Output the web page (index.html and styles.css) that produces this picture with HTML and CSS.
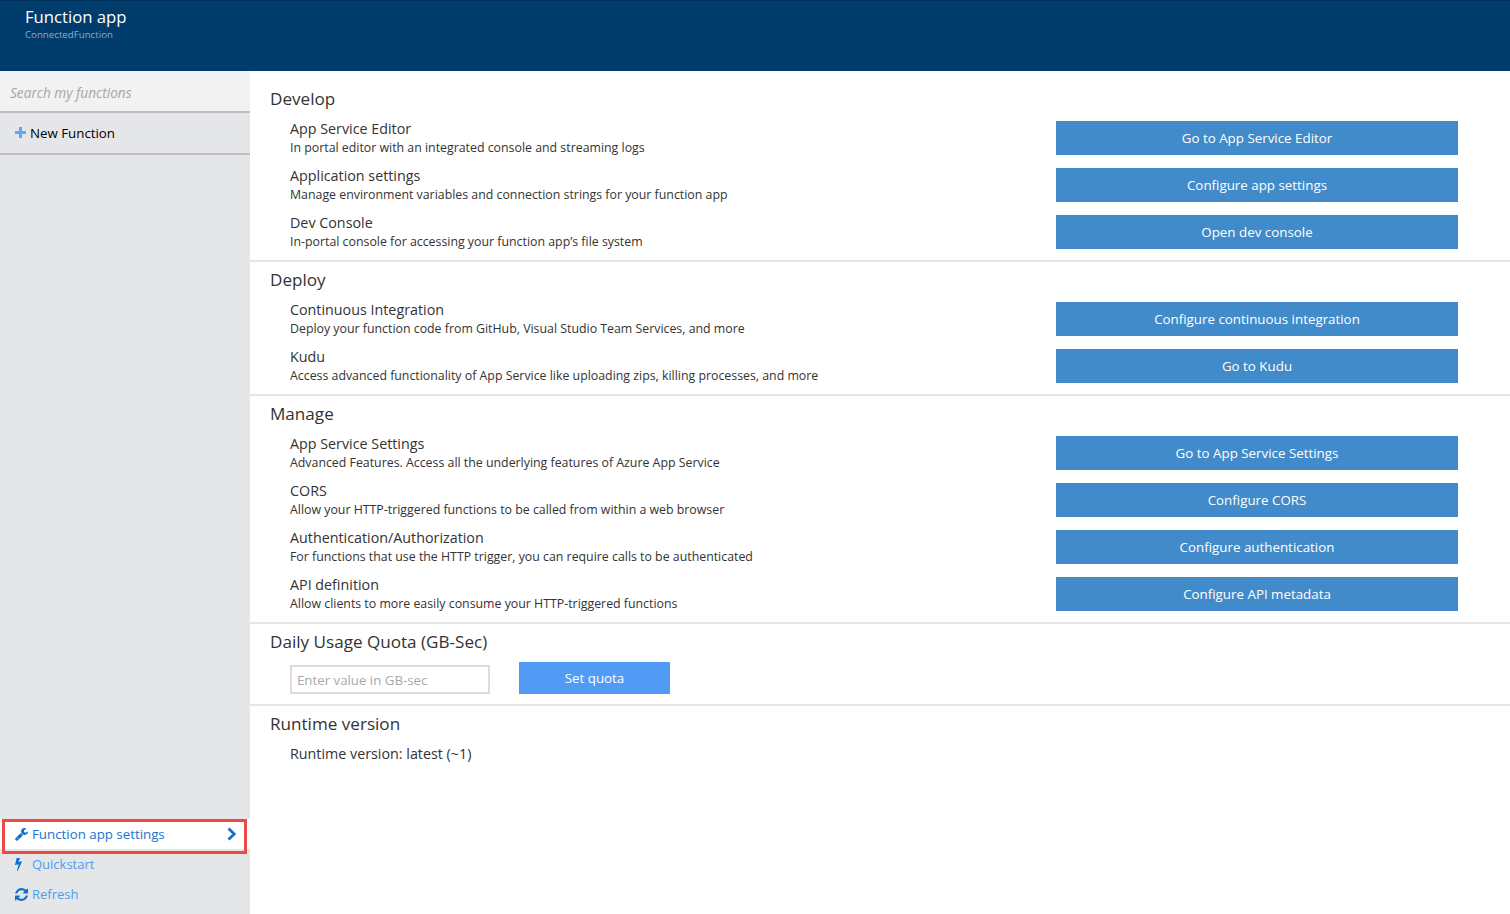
FILE: index.html
```html
<!DOCTYPE html>
<html lang="en">
<head>
<meta charset="utf-8">
<title>Function app</title>
<link rel="stylesheet" href="styles.css">
</head>
<body>
<header class="topbar">
  <h1 class="topbar-title">Function app</h1>
  <p class="topbar-sub">ConnectedFunction</p>
</header>
<div class="layout">
  <nav class="sidebar">
    <input class="search" type="text" placeholder="Search my functions">
    <a class="new-function">
      <svg class="plus" viewBox="0 0 11 11"><path d="M4 0h3v4h4v3H7v4H4V7H0V4h4z"/></svg>
      <span>New Function</span>
    </a>
    <div class="sidebar-bottom">
      <a class="nav-item active">
        <svg class="icon" viewBox="0 0 1664 1664"><path d="M384 1344q0-26-19-45t-45-19-45 19-19 45 19 45 45 19 45-19 19-45zm644-420l-682 682q-37 37-90 37-52 0-91-37l-106-108q-38-36-38-90 0-53 38-91l681-681q39 98 114.500 173.500t173.500 114.500zm634-435q0 39-23 106-47 134-164.500 217.500t-258.500 83.500q-185 0-316.500-131.500t-131.500-316.500 131.500-316.500 316.500-131.500q58 0 121.500 16.500t107.500 46.500q16 11 16 28t-16 28l-293 169v224l193 107q5-3 79-48.500t135.500-81 70.500-35.500q15 0 23.500 10t8.500 25z"/></svg>
        <span>Function app settings</span>
        <svg class="chevron" viewBox="0 0 10 14"><path d="M1.500 1.500L7.200 7l-5.700 5.500"/></svg>
        <span class="highlight"></span>
      </a>
      <a class="nav-item">
        <svg class="icon bolt" viewBox="0 0 896 1664"><path d="M885 566q18 20 7 44l-540 1157q-13 25-42 25-4 0-14-2-17-5-25.500-19t-4.500-30l197-808-406 101q-4 1-12 1-18 0-31-11-18-15-13-39l201-825q4-14 16-23t28-9h328q19 0 32 12.500t13 29.500q0 8-5 18l-171 463 396-98q8-2 12-2 19 0 34 15z"/></svg>
        <span>Quickstart</span>
      </a>
      <a class="nav-item">
        <svg class="icon" viewBox="0 0 1536 1536"><path d="M1511 928q0 5-1 7-64 268-268 434.500t-478 166.500q-146 0-282.500-55t-243.500-157l-129 129q-19 19-45 19t-45-19-19-45v-448q0-26 19-45t45-19h448q26 0 45 19t19 45-19 45l-137 137q71 66 161 102t187 36q134 0 250-65t186-179q11-17 53-117 8-23 30-23h192q13 0 22.500 9.500t9.500 22.500zm25-800v448q0 26-19 45t-45 19h-448q-26 0-45-19t-19-45 19-45l138-138q-148-137-349-137-134 0-250 65t-186 179q-11 17-53 117-8 23-30 23h-199q-13 0-22.500-9.500t-9.500-22.500v-7q65-268 270-434.500t480-166.500q146 0 284 55.500t245 156.500l130-129q19-19 45-19t45 19 19 45z"/></svg>
        <span>Refresh</span>
      </a>
    </div>
  </nav>
  <main class="content">
    <section class="section">
      <h2>Develop</h2>
      <div class="rows">
        <div class="row"><div class="info"><h3>App Service Editor</h3><p>In portal editor with an integrated console and streaming logs</p></div><button class="action">Go to App Service Editor</button></div>
        <div class="row"><div class="info"><h3>Application settings</h3><p>Manage environment variables and connection strings for your function app</p></div><button class="action">Configure app settings</button></div>
        <div class="row"><div class="info"><h3>Dev Console</h3><p>In-portal console for accessing your function app’s file system</p></div><button class="action">Open dev console</button></div>
      </div>
    </section>
    <section class="section">
      <h2>Deploy</h2>
      <div class="rows">
        <div class="row"><div class="info"><h3>Continuous Integration</h3><p>Deploy your function code from GitHub, Visual Studio Team Services, and more</p></div><button class="action">Configure continuous integration</button></div>
        <div class="row"><div class="info"><h3>Kudu</h3><p>Access advanced functionality of App Service like uploading zips, killing processes, and more</p></div><button class="action">Go to Kudu</button></div>
      </div>
    </section>
    <section class="section">
      <h2>Manage</h2>
      <div class="rows">
        <div class="row"><div class="info"><h3>App Service Settings</h3><p>Advanced Features. Access all the underlying features of Azure App Service</p></div><button class="action">Go to App Service Settings</button></div>
        <div class="row"><div class="info"><h3>CORS</h3><p>Allow your HTTP-triggered functions to be called from within a web browser</p></div><button class="action">Configure CORS</button></div>
        <div class="row"><div class="info"><h3>Authentication/Authorization</h3><p>For functions that use the HTTP trigger, you can require calls to be authenticated</p></div><button class="action">Configure authentication</button></div>
        <div class="row"><div class="info"><h3>API definition</h3><p>Allow clients to more easily consume your HTTP-triggered functions</p></div><button class="action">Configure API metadata</button></div>
      </div>
    </section>
    <section class="section quota">
      <h2>Daily Usage Quota (GB-Sec)</h2>
      <div class="quota-form">
        <input class="quota-input" type="text" placeholder="Enter value in GB-sec">
        <button class="quota-button">Set quota</button>
      </div>
    </section>
    <section class="section runtime">
      <h2>Runtime version</h2>
      <div class="rows"><div class="info"><h3>Runtime version: latest (~1)</h3></div></div>
    </section>
  </main>
</div>
</body>
</html>
```
FILE: styles.css
```css
* { box-sizing: border-box; }
body {
  margin: 0;
  height: 914px;
  display: flex;
  flex-direction: column;
  overflow: hidden;
  background: #fff;
  color: #333;
  font-family: "Open Sans", "Noto Sans", sans-serif;
}
h1, h2, h3, p { margin: 0; font-weight: 400; white-space: nowrap; }
input, button { font-family: inherit; border: 0; border-radius: 0; outline: 0; }

.topbar {
  height: 71px;
  flex: none;
  padding: 5px 25px 0;
  background: #003c6c;
  border-top: 1px solid #002f57;
}
.topbar-title { font-size: 16.7px; line-height: 22px; color: #fff; }
.topbar-sub { font-size: 9.7px; line-height: 13px; color: #8fabc4; }

.layout { flex: 1; display: flex; min-height: 0; }

.sidebar {
  width: 250px;
  flex: none;
  display: flex;
  flex-direction: column;
  background: #e5e6e8;
}
.search {
  height: 42px;
  padding: 2px 10px 0;
  background: #f2f2f2;
  border-bottom: 2px solid #bfbfc1;
  font-size: 13.65px;
  font-style: italic;
}
.search::placeholder { color: #a6a6a6; opacity: 1; }
.new-function {
  display: flex;
  align-items: center;
  gap: 4px;
  height: 42px;
  padding-left: 15px;
  border-bottom: 2px solid #bfbfc1;
  font-size: 13.3px;
  color: #000;
}
.plus { width: 11px; height: 11px; margin-top: -1px; fill: #62a8f6; }
.sidebar-bottom { margin-top: auto; padding-bottom: 5px; }
.nav-item {
  display: flex;
  align-items: center;
  gap: 4px;
  height: 30px;
  padding: 0 13px 0 15px;
  font-size: 13px;
  color: #4c9df2;
}
.nav-item.active {
  position: relative;
  background: #fff;
  color: #1a73cf;
  font-size: 13.3px;
}
/* Red callout frame drawn over the active item */
.highlight {
  position: absolute;
  top: 0;
  left: 2px;
  width: 245px;
  height: 35px;
  border: 3px solid #ec4b45;
}
.icon { width: 13px; height: 13px; fill: #0f70d0; }
.bolt { width: 7px; height: 13px; margin: -2px 6px 0 0; overflow: visible; }
.chevron {
  width: 10px;
  height: 14px;
  margin: -1px 0 0 auto;
  fill: none;
  stroke: #0f70d0;
  stroke-width: 2.8;
}

.content { flex: 1; padding-top: 10px; }
.section { padding-bottom: 11px; border-bottom: 2px solid #e6e6e6; }
.section h2 { height: 40px; padding-left: 20px; font-size: 17.1px; line-height: 36px; }
.rows { display: flex; flex-direction: column; gap: 13px; padding: 0 52px 0 40px; }
.row { display: flex; justify-content: space-between; height: 34px; }
.info { margin-top: -2px; }
.info h3 { font-size: 14.3px; line-height: 20px; }
.info p { font-size: 12.35px; line-height: 18px; }
.action { width: 402px; height: 34px; background: #428bca; color: #fff; font-size: 13.35px; }

.quota { padding-bottom: 10px; }
.section.quota h2 { height: 38px; }
.quota-form { display: flex; align-items: flex-end; gap: 29px; padding-left: 40px; }
.quota-input {
  width: 200px;
  height: 29px;
  padding: 1px 5px 0;
  border: 2px solid #dcdcdc;
  font-size: 13.25px;
}
.quota-input::placeholder { color: #a9a9a9; opacity: 1; }
.quota-button { width: 151px; height: 32px; background: #529bf5; color: #fff; font-size: 13.35px; }
.runtime { border-bottom: 0; }
```
